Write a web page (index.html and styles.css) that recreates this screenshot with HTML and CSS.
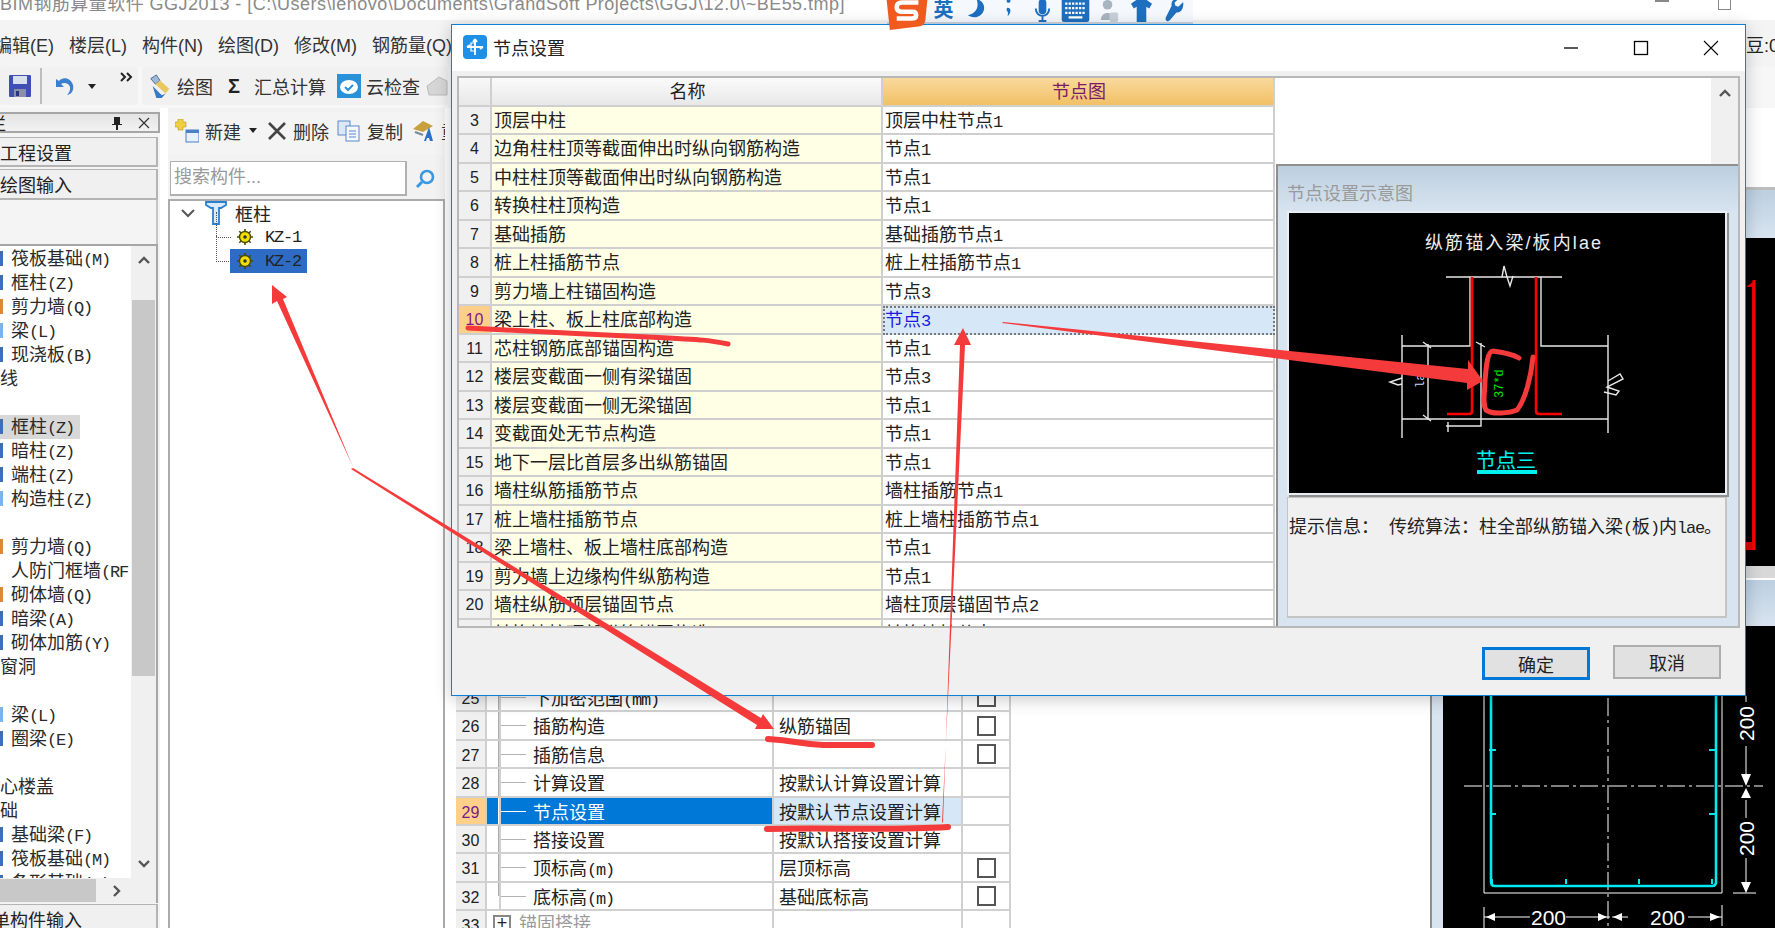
FILE: index.html
```html
<!DOCTYPE html>
<html lang="zh-CN">
<head>
<meta charset="utf-8">
<title>节点设置</title>
<link rel="stylesheet" href="styles.css">
</head>
<body>
<div class="app">
  <div class="titlebar"><span class="title-text">BIM钢筋算量软件 GGJ2013 - [C:\Users\lenovo\Documents\GrandSoft Projects\GGJ\12.0\~BE55.tmp]</span></div>
  <div class="menubar">
    <span class="menu first">编辑(E)</span><span class="menu">楼层(L)</span><span class="menu">构件(N)</span><span class="menu">绘图(D)</span><span class="menu">修改(M)</span><span class="menu">钢筋量(Q)</span>
    <span class="menu-right">豆:0</span>
  </div>
  <div class="toolbar">
    <div class="tool-seg seg-a">
      <svg class="ic24" viewBox="0 0 24 24"><rect x="1" y="1" width="22" height="22" rx="1" fill="#3f4fb5"/><rect x="5" y="2" width="14" height="8" fill="#d8e0ee"/><rect x="6" y="15" width="12" height="8" fill="#8a90a8"/><rect x="8" y="17" width="3" height="5" fill="#2c3480"/></svg>
      <i class="vsep"></i>
      <svg class="ic22" viewBox="0 0 22 24"><path d="M3 5v8h8L8 10c3-2 8-1 9 3 .6 3-1 6-3 8 5-1 7-5 6-10C18 4 10 2 6 7z" fill="#3a7fd0"/></svg>
      <i class="caret"></i>
      <svg class="ic-more" viewBox="0 0 14 12"><path d="M1 2l4 4-4 4M7 2l4 4-4 4" fill="none" stroke="#222" stroke-width="2"/></svg>
    </div>
    <div class="tool-seg seg-b">
      <svg class="ic24" viewBox="0 0 26 26"><path d="M3 5l6-4 4 6-5 4z" fill="#9db8d8" stroke="#4a6a90"/><path d="M8 11l5-4 10 9-4 5z" fill="#e8c860"/><path d="M5 13l10 10 4-2-4 5H9z" fill="#3a78c8"/></svg>
      <span class="tool-label">绘图</span>
      <span class="sigma">Σ</span>
      <span class="tool-label sum">汇总计算</span>
      <svg class="ic24" viewBox="0 0 24 24"><rect width="24" height="24" fill="#2a90d8"/><ellipse cx="12" cy="13" rx="9" ry="7" fill="#fff"/><path d="M8 13l3 3 5-5" fill="none" stroke="#2a90d8" stroke-width="2"/></svg>
      <span class="tool-label">云检查</span>
      <svg class="ic24" viewBox="0 0 24 24"><path d="M2 12L14 3l8 4v14H4z" fill="#d6d6d6" stroke="#bbb"/></svg>
    </div>
  </div>
  <div class="main">
    <aside class="left">
      <div class="panel-title"><span class="panel-cut">栏</span>
        <svg class="pin" viewBox="0 0 12 14"><path d="M3 1h6v7h2v1H7v5H5V9H1V8h2z" fill="#222"/></svg>
        <svg class="pin" viewBox="0 0 12 12"><path d="M1 1l10 10M11 1L1 11" stroke="#333" stroke-width="1.2"/></svg>
      </div>
      <div class="side-tab">工程设置</div>
      <div class="side-tab second"><span class="cut">绘图输入</span></div>
      <div class="side-gap"></div>
      <div class="list-frame">
        <div class="list-top">
          <ul class="list">
            <li class="li"><i class="chip blue"></i>筏板基础<span class="lat">(M)</span></li>
            <li class="li"><i class="chip blue"></i>框柱<span class="lat">(Z)</span></li>
            <li class="li"><i class="chip orange"></i>剪力墙<span class="lat">(Q)</span></li>
            <li class="li"><i class="chip sky"></i>梁<span class="lat">(L)</span></li>
            <li class="li"><i class="chip blue"></i>现浇板<span class="lat">(B)</span></li>
            <li class="li grp g1">轴线</li>
            <li class="li"></li>
            <li class="li sel"><i class="chip blue"></i>框柱<span class="lat">(Z)</span></li>
            <li class="li"><i class="chip blue"></i>暗柱<span class="lat">(Z)</span></li>
            <li class="li"><i class="chip blue"></i>端柱<span class="lat">(Z)</span></li>
            <li class="li"><i class="chip sky"></i>构造柱<span class="lat">(Z)</span></li>
            <li class="li"></li>
            <li class="li"><i class="chip orange"></i>剪力墙<span class="lat">(Q)</span></li>
            <li class="li deep">人防门框墙<span class="lat">(RF</span></li>
            <li class="li"><i class="chip orange"></i>砌体墙<span class="lat">(Q)</span></li>
            <li class="li"><i class="chip blue"></i>暗梁<span class="lat">(A)</span></li>
            <li class="li"><i class="chip blue"></i>砌体加筋<span class="lat">(Y)</span></li>
            <li class="li grp g1b">门窗洞</li>
            <li class="li"></li>
            <li class="li"><i class="chip sky"></i>梁<span class="lat">(L)</span></li>
            <li class="li"><i class="chip blue"></i>圈梁<span class="lat">(E)</span></li>
            <li class="li"></li>
            <li class="li grp g1">空心楼盖</li>
            <li class="li grp g1">基础</li>
            <li class="li"><i class="chip blue"></i>基础梁<span class="lat">(F)</span></li>
            <li class="li"><i class="chip blue"></i>筏板基础<span class="lat">(M)</span></li>
            <li class="li"><i class="chip blue"></i>条形基础<span class="lat">(T)</span></li>
          </ul>
          <div class="vscroll">
            <svg class="arr" viewBox="0 0 12 8"><path d="M1 7l5-5 5 5" fill="none" stroke="#555" stroke-width="2.4"/></svg>
            <div class="thumb"></div>
            <svg class="arr arr-down" viewBox="0 0 12 8"><path d="M1 1l5 5 5-5" fill="none" stroke="#555" stroke-width="2.4"/></svg>
          </div>
        </div>
        <div class="hscroll"><div class="hthumb"></div>
          <svg class="arr-r" viewBox="0 0 8 12"><path d="M1 1l5 5-5 5" fill="none" stroke="#555" stroke-width="2.4"/></svg>
        </div>
      </div>
      <div class="side-tab last"><span class="cut">单构件输入</span></div>
    </aside>

    <section class="tree-pane">
      <div class="pane-tools">
        <svg class="ic24" viewBox="0 0 24 24"><path d="M3 0h5v3h3v5H8v3H3V8H0V3h3z" fill="#f0d040" stroke="#b89820" stroke-width=".6"/><rect x="11" y="11" width="13" height="12" fill="#e8f0fa" stroke="#4a80c8"/><rect x="11" y="11" width="13" height="3" fill="#4a80c8"/></svg>
        <span class="tool-label narrow">新建</span><i class="caret small"></i>
        <svg class="ic20" viewBox="0 0 20 20"><path d="M2 2l16 16M18 2L2 18" stroke="#444" stroke-width="2.6"/></svg>
        <span class="tool-label narrow">删除</span>
        <svg class="ic24" viewBox="0 0 24 22"><rect x="1" y="1" width="12" height="14" fill="#dce8f8" stroke="#5a88c8"/><rect x="9" y="6" width="13" height="15" fill="#f4f8ff" stroke="#5a88c8"/><path d="M12 11h7M12 14h7M12 17h7" stroke="#5a88c8"/></svg>
        <span class="tool-label narrow">复制</span>
        <svg class="ic24" viewBox="0 0 24 24"><path d="M2 10l10-8 10 5-10 6z" fill="#c8a040"/><path d="M4 13l8 3" stroke="#789" stroke-width="2"/><path d="M13 22l5-14 4 14h-3l-1-3h-2l-1 3z" fill="#2a70c8"/></svg>
        <span class="tool-label narrow">重</span>
      </div>
      <div class="search-row">
        <div class="search">搜索构件...</div>
        <svg class="glass" viewBox="0 0 22 22"><circle cx="13" cy="9" r="6" fill="none" stroke="#3a98e0" stroke-width="2.6"/><path d="M8 14l-5 5" stroke="#3a98e0" stroke-width="3"/></svg>
      </div>
      <div class="tree">
        <div class="node root">
          <svg class="chev" viewBox="0 0 14 10"><path d="M1 2l6 6 6-6" fill="none" stroke="#555" stroke-width="2"/></svg>
          <svg class="column-ic" viewBox="0 0 22 24"><path d="M1 1h20v3l-5 3h-2v16H8V7H6L1 4z" fill="#dceaf8" stroke="#2a80d0" stroke-width="1.8"/></svg>
          <span>框柱</span>
        </div>
        <div class="node leaf"><svg class="gear" viewBox="0 0 16 16"><circle cx="8" cy="8" r="5.5" fill="#f4e000" stroke="#4a4a00" stroke-width="1.4"/><circle cx="8" cy="8" r="1.8" fill="#333"/><path d="M8 0v3M8 13v3M0 8h3M13 8h3M2.3 2.3l2 2M11.7 11.7l2 2M13.7 2.3l-2 2M4.3 11.7l-2 2" stroke="#4a4a00" stroke-width="1.6"/></svg><span class="kz">KZ-1</span></div>
        <div class="node leaf active"><span class="kz-wrap"><svg class="gear" viewBox="0 0 16 16"><circle cx="8" cy="8" r="5.5" fill="#f4e000" stroke="#4a4a00" stroke-width="1.4"/><circle cx="8" cy="8" r="1.8" fill="#333"/><path d="M8 0v3M8 13v3M0 8h3M13 8h3M2.3 2.3l2 2M11.7 11.7l2 2M13.7 2.3l-2 2M4.3 11.7l-2 2" stroke="#4a4a00" stroke-width="1.6"/></svg><span class="kz">KZ-2</span></span></div>
      </div>
    </section>

    <section class="prop-pane">
      <div class="prop-row"><span class="p-num">25</span><span class="p-tree"></span><span class="p-name">下加密范围<span class="lat">(mm)</span></span><span class="p-val"></span><span class="p-chk"><i class="box"></i></span></div>
      <div class="prop-row"><span class="p-num">26</span><span class="p-tree"></span><span class="p-name">插筋构造</span><span class="p-val">纵筋锚固</span><span class="p-chk"><i class="box"></i></span></div>
      <div class="prop-row"><span class="p-num">27</span><span class="p-tree"></span><span class="p-name">插筋信息</span><span class="p-val"></span><span class="p-chk"><i class="box"></i></span></div>
      <div class="prop-row"><span class="p-num">28</span><span class="p-tree"></span><span class="p-name">计算设置</span><span class="p-val">按默认计算设置计算</span><span class="p-chk"></span></div>
      <div class="prop-row picked"><span class="p-num">29</span><span class="p-tree"></span><span class="p-name">节点设置</span><span class="p-val">按默认节点设置计算</span><span class="p-chk"></span></div>
      <div class="prop-row"><span class="p-num">30</span><span class="p-tree"></span><span class="p-name">搭接设置</span><span class="p-val">按默认搭接设置计算</span><span class="p-chk"></span></div>
      <div class="prop-row"><span class="p-num">31</span><span class="p-tree"></span><span class="p-name">顶标高<span class="lat">(m)</span></span><span class="p-val">层顶标高</span><span class="p-chk"><i class="box"></i></span></div>
      <div class="prop-row end"><span class="p-num">32</span><span class="p-tree"></span><span class="p-name">底标高<span class="lat">(m)</span></span><span class="p-val">基础底标高</span><span class="p-chk"><i class="box"></i></span></div>
      <div class="prop-row group"><span class="p-num">33</span><span class="p-group"><i class="plus">+</i>锚固搭接</span><span class="p-val"></span><span class="p-chk"></span></div>
    </section>

    <section class="draw-pane">
      <div class="rail"></div>
      <div class="views">
        <div class="v-top"></div>
        <div class="v-band"></div>
        <div class="v-black upper">
          <svg class="fill-svg" viewBox="1443 238 332 328"><path d="M1746 287l9-7v270h-9v-8h6V287z" fill="#e00000"/><path d="M1754 280v270" stroke="#f00" stroke-width="3"/></svg>
        </div>
        <div class="v-gray"></div>
        <div class="v-band low"></div>
        <div class="v-black lower">
          <svg class="fill-svg" viewBox="1443 626 332 302">
            <g fill="none" stroke="#fff">
              <path d="M1484 650v243h238V650"/>
              <path d="M1464 786h299" stroke-dasharray="18 4 3 4"/>
              <path d="M1608 640v288" stroke-dasharray="18 4 3 4"/>
              <path d="M1746 696v6M1746 746v28M1746 800v18M1746 858v26M1733 893h23M1484 907v21M1722 905v21"/>
              <path d="M1484 917h46M1566 917h44M1612 917h16M1688 917h34"/>
            </g>
            <g fill="#fff">
              <path d="M1741 774h10l-5 12zM1741 798h10l-5-10zM1741 882h10l-5 11zM1486 917l9-4v8zM1598 913l9 4-9 4zM1622 913l-9 4 9 4zM1710 913l10 4-10 4z"/>
              <text class="dim" transform="translate(1754 741) rotate(-90)">200</text>
              <text class="dim" transform="translate(1754 856) rotate(-90)">200</text>
              <text class="dim" x="1531" y="925">200</text>
              <text class="dim" x="1650" y="925">200</text>
            </g>
            <path d="M1491 640v242q0 4 4 4h217q4 0 4-4V640" fill="none" stroke="#00e8f0" stroke-width="2.6"/>
            <g stroke="#00e8f0" stroke-width="2" fill="none">
              <path d="M1490 750h6M1490 814h6M1709 750h6M1709 814h6M1492 879v5M1566 879v5M1639 879v5M1712 879v5M1489 750h2"/>
            </g>
          </svg>
        </div>
      </div>
    </section>
  </div>
</div>

<div class="ime">
  <svg class="ime-logo" viewBox="0 0 40 28"><path d="M2 0h36l-2 20q-1 5-6 5L5 28z" fill="#f05a1e"/><path d="M30 4H16q-5 0-5 4t5 4h9q3 0 3 3t-4 3H11" fill="none" stroke="#fff" stroke-width="4"/></svg>
  <span class="ime-en">英</span>
  <svg class="ime-ic" viewBox="0 0 20 24"><path d="M10 0c3 8 0 15-9 17 8 5 17 0 17-8 0-4-3-8-8-9z" fill="#1f6fc0"/></svg>
  <svg class="ime-ic" viewBox="0 0 10 24"><circle cx="4" cy="2" r="2" fill="#1f6fc0"/><path d="M3 9c4 0 4 5 0 9 1-4 0-5-1-6 0-2 0-3 1-3z" fill="#1f6fc0"/></svg>
  <svg class="ime-ic" viewBox="0 0 20 24"><rect x="6" width="8" height="16" rx="4" fill="#1f6fc0"/><path d="M3 10c0 10 14 10 14 0M10 18v5M6 23h8" fill="none" stroke="#1f6fc0" stroke-width="2"/></svg>
  <svg class="ime-ic" viewBox="0 0 24 20"><rect width="24" height="20" rx="2" fill="#1f6fc0"/><path d="M3 4h18M3 8h18M3 12h18" stroke="#fff" stroke-width="2" stroke-dasharray="2 1"/><path d="M6 16h12" stroke="#fff" stroke-width="2"/></svg>
  <svg class="ime-ic" viewBox="0 0 20 24"><circle cx="9" cy="6" r="5" fill="#a8b4c0"/><path d="M2 22c0-10 14-10 14 0z" fill="#a8b4c0"/><rect x="11" y="14" width="9" height="10" rx="2" fill="#c8d0d8"/></svg>
  <svg class="ime-ic" viewBox="0 0 22 24"><path d="M7 0h8l7 5-3 5-3-2v16H6V8l-3 2-3-5z" fill="#1f6fc0"/></svg>
  <svg class="ime-ic" viewBox="0 0 20 24"><path d="M19 3l-5 5-3-1-1-3 4-4c-4-1-8 2-7 7L1 19q-1 3 1 4t4-2l6-7c5 1 8-5 7-11z" fill="#1f6fc0"/></svg>
</div>
<div class="winctl top-min"></div>
<div class="winctl top-res"></div>

<div class="dialog">
  <header class="dlg-head">
    <svg class="dlg-icon" viewBox="0 0 24 24"><rect width="24" height="24" rx="4" fill="#1e90e8"/><path d="M12 4v16M4 12h16M12 4l-2 3M12 4l2 3M4 12l3-2M20 12l-3 2" fill="none" stroke="#fff" stroke-width="1.8"/><path d="M8 8h4v8H8z" fill="none" stroke="#fff" stroke-width="1.2"/></svg>
    <span class="dlg-title">节点设置</span>
    <span class="dlg-ctrls">
      <svg class="ctl" viewBox="0 0 16 16"><path d="M1 8h14" stroke="#000" stroke-width="1.3"/></svg>
      <svg class="ctl" viewBox="0 0 16 16"><rect x="1.5" y="1.5" width="13" height="13" fill="none" stroke="#000" stroke-width="1.3"/></svg>
      <svg class="ctl" viewBox="0 0 16 16"><path d="M1 1l14 14M15 1L1 15" stroke="#000" stroke-width="1.1"/></svg>
    </span>
  </header>
  <div class="dlg-body">
    <div class="grid-box">
      <div class="grid">
        <div class="g-row head"><span class="c-num"></span><span class="c-name">名称</span><span class="c-val">节点图</span></div>
        <div class="g-row"><span class="c-num">3</span><span class="c-name">顶层中柱</span><span class="c-val">顶层中柱节点<span class="lat">1</span></span></div>
        <div class="g-row"><span class="c-num">4</span><span class="c-name">边角柱柱顶等截面伸出时纵向钢筋构造</span><span class="c-val">节点<span class="lat">1</span></span></div>
        <div class="g-row"><span class="c-num">5</span><span class="c-name">中柱柱顶等截面伸出时纵向钢筋构造</span><span class="c-val">节点<span class="lat">1</span></span></div>
        <div class="g-row"><span class="c-num">6</span><span class="c-name">转换柱柱顶构造</span><span class="c-val">节点<span class="lat">1</span></span></div>
        <div class="g-row"><span class="c-num">7</span><span class="c-name">基础插筋</span><span class="c-val">基础插筋节点<span class="lat">1</span></span></div>
        <div class="g-row"><span class="c-num">8</span><span class="c-name">桩上柱插筋节点</span><span class="c-val">桩上柱插筋节点<span class="lat">1</span></span></div>
        <div class="g-row"><span class="c-num">9</span><span class="c-name">剪力墙上柱锚固构造</span><span class="c-val">节点<span class="lat">3</span></span></div>
        <div class="g-row now"><span class="c-num">10</span><span class="c-name">梁上柱、板上柱底部构造</span><span class="c-val">节点<span class="lat">3</span></span></div>
        <div class="g-row"><span class="c-num">11</span><span class="c-name">芯柱钢筋底部锚固构造</span><span class="c-val">节点<span class="lat">1</span></span></div>
        <div class="g-row"><span class="c-num">12</span><span class="c-name">楼层变截面一侧有梁锚固</span><span class="c-val">节点<span class="lat">3</span></span></div>
        <div class="g-row"><span class="c-num">13</span><span class="c-name">楼层变截面一侧无梁锚固</span><span class="c-val">节点<span class="lat">1</span></span></div>
        <div class="g-row"><span class="c-num">14</span><span class="c-name">变截面处无节点构造</span><span class="c-val">节点<span class="lat">1</span></span></div>
        <div class="g-row"><span class="c-num">15</span><span class="c-name">地下一层比首层多出纵筋锚固</span><span class="c-val">节点<span class="lat">1</span></span></div>
        <div class="g-row"><span class="c-num">16</span><span class="c-name">墙柱纵筋插筋节点</span><span class="c-val">墙柱插筋节点<span class="lat">1</span></span></div>
        <div class="g-row"><span class="c-num">17</span><span class="c-name">桩上墙柱插筋节点</span><span class="c-val">桩上墙柱插筋节点<span class="lat">1</span></span></div>
        <div class="g-row"><span class="c-num">18</span><span class="c-name">梁上墙柱、板上墙柱底部构造</span><span class="c-val">节点<span class="lat">1</span></span></div>
        <div class="g-row"><span class="c-num">19</span><span class="c-name">剪力墙上边缘构件纵筋构造</span><span class="c-val">节点<span class="lat">1</span></span></div>
        <div class="g-row"><span class="c-num">20</span><span class="c-name">墙柱纵筋顶层锚固节点</span><span class="c-val">墙柱顶层锚固节点<span class="lat">2</span></span></div>
        <div class="g-row"><span class="c-num">21</span><span class="c-name">转换墙柱顶部纵筋锚固构造</span><span class="c-val">转换墙柱节点<span class="lat">1</span></span></div>
      </div>
      <div class="grid-scroll"><svg class="arr" viewBox="0 0 12 8"><path d="M1 7l5-5 5 5" fill="none" stroke="#555" stroke-width="2.4"/></svg></div>
      <div class="hint">
        <div class="hint-title">节点设置示意图</div>
        <div class="diagram">
          <svg class="fill-svg" viewBox="1290 213 436 280">
            <text class="d-title" x="1426" y="249">纵筋锚入梁/板内lae</text>
            <g fill="none" stroke="#e8e8e8" stroke-width="1.4">
              <path d="M1447 277h116"/>
              <path d="M1471 277v69h-68M1542 277v69h67"/>
              <path d="M1403 335v103M1609 335v98M1403 419h206"/>
              <path d="M1429 344v75M1424 342l8 6M1424 415l8 6"/>
              <path d="M1482 343v83h-35M1477 342l9 5M1449 422v10"/>
              <path d="M1505 266l3 11 3 9 3-10M1503 277l2-11"/>
              <path d="M1609 381l12-7 3 5-16 8 12 4-3 4-12-3M1403 378l-12 4 8 3 4-1"/>
            </g>
            <g fill="none" stroke="#f00" stroke-width="2.6">
              <path d="M1473 277v134q0 3-3 3h-22"/>
              <path d="M1537 277v134q0 3 3 3h23"/>
            </g>
            <text class="d-green" transform="translate(1504 398) rotate(-90)">37*d</text>
            <text class="d-la" transform="translate(1425 388) rotate(-90)">la</text>
            <text class="d-cyan" x="1507" y="468">节点三</text>
            <rect x="1478" y="470" width="60" height="4" fill="#00f0f0"/>
          </svg>
        </div>
        <div class="hint-info">提示信息：  传统算法：柱全部纵筋锚入梁<span class="lat">(</span>板<span class="lat">)</span>内<span class="lat">lae</span>。</div>
      </div>
    </div>
    <div class="dlg-foot">
      <button class="btn primary">确定</button>
      <button class="btn">取消</button>
    </div>
  </div>
</div>

<svg class="marks" viewBox="0 0 1775 928">
  <g fill="#f43a3a">
    <path d="M353 467L277 301l-5 3v-19l15 12-4 2z"/>
    <path d="M351 469l2-1 408 250 2-4 11 15h-19l2-4z"/>
    <path d="M942 823l1-1 17-477h-6l9-17 8 17h-6z"/>
    <path d="M1002 323l1-1 465 47v-9l15 21-16 9 0-7z"/>
  </g>
  <g fill="none" stroke="#f43a3a" stroke-linecap="round">
    <path d="M468 328c50 3 120 6 180 9s60 3 80 7" stroke-width="5"/>
    <path d="M768 739c30 2 30 5 55 6h49" stroke-width="6"/>
    <path d="M767 829c60-2 120 2 181-2" stroke-width="6"/>
    <path d="M1519 358c-8-5-18-6-26-7-6 0-7 18-8 30 0 12-3 22 1 29 6 5 24 3 31 0 8-10 14-32 16-53" stroke-width="5"/>
  </g>
</svg>
</body>
</html>
```
FILE: styles.css
```css
* { box-sizing: border-box; }
html, body { margin: 0; padding: 0; width: 1775px; height: 928px; overflow: hidden; background: #fff; }
body { position: relative; font-family: "Liberation Sans", "Noto Sans CJK SC", sans-serif; font-size: 18px; color: #222; }
ul { list-style: none; margin: 0; padding: 0; }
.lat { font-family: "Liberation Mono", "Noto Sans CJK SC", monospace; font-size: 17px; letter-spacing: -1.2px; }

.app { width: 1775px; height: 928px; display: flex; flex-direction: column; overflow: hidden; }
.titlebar { height: 20px; background: #fff; overflow: hidden; flex: none; }
.title-text { display: block; margin-top: -8px; line-height: 24px; color: #8a8a8a; font-size: 18px; white-space: nowrap; letter-spacing: .46px; }

.menubar { height: 47px; flex: none; background: #f4f4f4; display: flex; align-items: center; gap: 15px; white-space: nowrap; position: relative; }
.menu { color: #333; }
.menu.first { margin-left: -6px; }
.menu-right { margin-left: auto; margin-right: -4px; }

.toolbar { height: 41px; flex: none; background: #f7f7f7; display: flex; align-items: center; gap: 4px; padding-bottom: 3px; }
.tool-seg { height: 38px; flex: none; display: flex; align-items: center; background: #f1f1f1; border-radius: 3px; }
.seg-a { width: 138px; padding-left: 8px; position: relative; }
.seg-b { width: 306px; padding-left: 6px; gap: 5px; }
.ic24 { width: 24px; height: 24px; flex: none; }
.ic22 { width: 22px; height: 24px; flex: none; }
.ic20 { width: 20px; height: 20px; flex: none; }
.vsep { width: 2px; height: 36px; background: #bdbdbd; margin: 0 11px 0 8px; }
.caret { width: 0; height: 0; border: 4px solid transparent; border-top: 5px solid #222; border-bottom: 0; margin-left: 13px; }
.caret.small { margin: 0 10px 0 0; }
.ic-more { position: absolute; left: 120px; top: 4px; width: 14px; height: 12px; }
.tool-label { white-space: nowrap; color: #333; }
.tool-label.sum { margin-right: 6px; }
.tool-label.narrow { margin: 0 8px 0 2px; }
.sigma { font-weight: bold; font-size: 20px; margin: 0 9px 0 10px; color: #222; }

.main { flex: 1; min-height: 0; display: flex; overflow: hidden; }

.left { width: 160px; flex: none; padding-top: 4px; display: flex; flex-direction: column; background: #f4f4f4; overflow: hidden; }
.panel-title { height: 21px; flex: none; display: flex; align-items: center; justify-content: flex-end; gap: 15px; padding-right: 8px; background: linear-gradient(#e4e4e4, #f2f2f2); border: 2px solid #a6a6a6; border-left: 0; position: relative; overflow: hidden; }
.panel-cut { margin-right: auto; margin-left: -11px; font-size: 17px; }
.pin { width: 12px; height: 14px; }
.side-tab { height: 30px; flex: none; margin-top: 4px; width: 158px; line-height: 32px; background: #f0f0f0; border: 1px solid #b4b4b4; border-width: 1px 2px 2px 0; overflow: hidden; white-space: nowrap; }
.side-tab.second { margin-top: 2px; height: 31px; }
.cut { display: block; margin-left: 0; }
.side-gap { height: 44px; flex: none; width: 158px; border-right: 2px solid #c4c4c4; }
.list-frame { height: 659px; flex: none; width: 158px; border: 2px solid #a6a6a6; border-width: 2px 2px 2px 0; display: flex; flex-direction: column; }
.list-top { height: 632px; flex: none; display: flex; }
.list { width: 131px; flex: none; background: #fff; overflow: hidden; padding-top: 1px; }
.li { height: 24px; line-height: 24px; padding-left: 11px; position: relative; white-space: nowrap; color: #2a2a2a; }
.li.sel { background: #d8d8d8; width: 80px; }
.li.grp { padding-left: 0; }
.li.g1, .li.g1b { margin-left: -18px; }
.chip { position: absolute; left: 0; top: 4px; width: 3px; height: 15px; }
.chip.blue { background: #3d6fb8; }
.chip.orange { background: #d88a3a; }
.chip.sky { background: #7ab4ec; }
.vscroll { width: 25px; flex: none; background: #f0f0f0; display: flex; flex-direction: column; align-items: center; padding-top: 10px; }
.arr { width: 12px; height: 8px; flex: none; }
.thumb { width: 23px; height: 376px; background: #c8c8c8; margin-top: 36px; flex: none; }
.arr-down { margin-top: 184px; }
.hscroll { height: 25px; flex: none; background: #f0f0f0; display: flex; align-items: center; position: relative; }
.hthumb { width: 96px; height: 23px; background: #c8c8c8; }
.arr-r { width: 8px; height: 12px; margin-left: 17px; }
.side-tab.last { margin-top: 1px; height: 40px; border-bottom: 0; }
.side-tab.last .cut { margin-left: -8px; }

.tree-pane { width: 277px; flex: none; margin-left: 8px; padding-top: 4px; display: flex; flex-direction: column; background: #f2f2f2; }
.pane-tools { height: 43px; flex: none; padding: 0 0 6px 7px; display: flex; align-items: center; overflow: hidden; background: #f4f4f4; white-space: nowrap; }
.pane-tools .ic24 { margin-right: 4px; }
.pane-tools .ic20 { margin-right: 4px; }
.search-row { height: 35px; margin-top: 6px; flex: none; display: flex; align-items: center; }
.search { width: 237px; height: 35px; margin-left: 2px; padding-left: 3px; line-height: 30px; border: 2px solid #b0b0b0; border-width: 1px 2px 2px 1px; background: #fff; color: #9a9a9a; }
.glass { width: 22px; height: 22px; margin-left: 7px; }
.tree { flex: 1; margin-top: 3px; width: 277px; background: #fff; border: 2px solid #ababab; border-bottom: 0; }
.node { height: 24px; display: flex; align-items: center; position: relative; white-space: nowrap; }
.node.root { padding-left: 11px; }
.chev { width: 14px; height: 10px; }
.column-ic { width: 22px; height: 24px; margin-left: 10px; }
.node.root span { margin-left: 8px; }
.node.leaf { padding-left: 60px; }
.node.leaf::before { content: ""; position: absolute; left: 46px; top: -13px; width: 14px; height: 25px; border-left: 1px dotted #555; border-bottom: 1px dotted #555; }
.gear { width: 16px; height: 16px; flex: none; margin-left: 7px; }
.kz { font-family: "Liberation Mono", monospace; font-size: 17px; letter-spacing: -1.2px; margin-left: 12px; color: #222; }
.kz-wrap { display: flex; align-items: center; width: 77px; height: 24px; background: #2e6bc4; }

.prop-pane { width: 985px; flex: none; padding: 576px 0 0 11px; background: #fff; overflow: hidden; }
.prop-row { height: 28.4px; display: flex; width: 555px; border-bottom: 2px solid #d0d0d0; line-height: 30px; }
.prop-row > span { display: block; height: 100%; border-right: 2px solid #d0d0d0; white-space: nowrap; overflow: hidden; }
.p-num { width: 31px; flex: none; background: #f0f0f0; text-align: center; font-size: 16px; }
.p-tree { width: 14px; flex: none; position: relative; }
.p-name { width: 273px; flex: none; padding-left: 32px; position: relative; }
.p-tree::after { content: ""; position: absolute; right: 0; top: -2px; bottom: -2px; width: 1px; background: #ababab; }
.p-name::before { content: ""; position: absolute; left: 0; top: 13px; width: 25px; height: 1px; background: #b4b4b4; }
.prop-row.end .p-tree::after { bottom: 13px; }
.p-val { width: 189px; flex: none; padding-left: 5px; }
.p-chk { width: 48px; flex: none; display: flex !important; align-items: center; justify-content: center; }
.box { width: 19px; height: 20px; border: 2px solid #555; background: #fff; }
.prop-row.picked .p-num { background: #fdd08a; color: #7a1a8a; }
.prop-row.picked .p-tree, .prop-row.picked .p-name { background: #0078d7; color: #fff; }
.prop-row.picked .p-name::before, .prop-row.picked .p-tree::after { background: #fff; }
.prop-row.picked .p-val { background: #d6e8f8; }
.p-group { width: 287px; flex: none; display: flex !important; align-items: center; color: #9a9a9a; padding-left: 6px; }
.plus { width: 18px; height: 18px; border: 2px solid #888; font-style: normal; color: #222; line-height: 13px; text-align: center; margin-right: 8px; font-size: 18px; }

.draw-pane { width: 345px; flex: none; border-left: 2px solid #8e8e8e; display: flex; }
.rail { width: 11px; flex: none; background: #d8e4f0; }
.views { flex: 1; min-width: 0; display: flex; flex-direction: column; }
.v-top { height: 82px; flex: none; background: #fff; border-bottom: 3px solid #bdbdbd; }
.v-band { height: 48px; flex: none; background: linear-gradient(#bccfe0, #d8e4f0); }
.v-band.low { height: 46px; }
.v-black { background: #000; overflow: hidden; }
.upper { height: 328px; flex: none; }
.lower { flex: 1; min-height: 0; }
.v-gray { height: 14px; flex: none; background: #d8d8d8; border-bottom: 2px solid #fff; }
.fill-svg { display: block; width: 100%; height: 100%; }
.dim { font-family: "Liberation Sans", sans-serif; font-size: 21px; }

.ime { position: absolute; left: 887px; top: -2px; width: 306px; height: 26px; display: flex; align-items: center; padding-left: 40px; background: #f5f9fd; border-bottom: 2px solid #c8d4e0; }
.ime-logo { position: absolute; left: -3px; top: 0; width: 46px; height: 32px; z-index: 1; }
.ime-en { color: #1f6fc0; font-weight: bold; font-size: 20px; line-height: 24px; width: 33px; text-align: center; flex: none; }
.ime-ic { width: 33px; height: 23px; flex: none; }

.winctl { position: absolute; top: 0; }
.top-min { left: 1655px; width: 14px; height: 2px; background: #888; }
.top-res { left: 1718px; width: 13px; height: 10px; border: 1px solid #888; border-top: 0; }

.dialog { position: absolute; left: 451px; top: 24px; width: 1295px; height: 672px; background: #f0f0f0; border: 1px solid #0f80d8; display: flex; flex-direction: column; box-shadow: 0 3px 16px rgba(0, 0, 0, .22); }
.dlg-head { height: 46px; flex: none; background: #fff; display: flex; align-items: center; padding-left: 11px; }
.dlg-icon { width: 24px; height: 24px; margin-top: -2px; }
.dlg-title { margin: -2px 0 0 6px; }
.dlg-ctrls { margin-left: auto; display: flex; gap: 54px; margin-right: 26px; }
.ctl { width: 16px; height: 16px; }
.dlg-body { flex: 1; min-height: 0; padding: 5px 5px 0 5px; display: flex; flex-direction: column; }
.grid-box { height: 552px; flex: none; background: #fff; border: 2px solid #b8b8b8; position: relative; overflow: hidden; display: flex; }
.grid { width: 816px; flex: none; overflow: hidden; }
.g-row { height: 28.5px; display: flex; line-height: 28px; white-space: nowrap; }
.g-row > span { display: block; height: 100%; overflow: hidden; border-bottom: 2px solid #cfcfcf; border-right: 2px solid #cfcfcf; }
.c-num { width: 33px; flex: none; background: #f0f0f0; text-align: center; font-size: 16px; }
.c-name { width: 391px; flex: none; background: #ffffe6; padding-left: 2px; }
.c-val { width: 392px; flex: none; background: #fff; padding-left: 2px; }
.g-row.head > span { text-align: center; }
.g-row.head .c-num { background: linear-gradient(#f8f8f8, #e8e8e8); }
.g-row.head .c-name { background: linear-gradient(#fbfbfb, #e8e8e8); }
.g-row.head .c-val { background: linear-gradient(#f9d99c, #f2c066); color: #7a1a6a; }
.g-row.now .c-num { background: #fdd08a; color: #7a1a8a; }
.g-row.now .c-val { background: #d6e8f8; color: #1a1ae0; border: 2px dotted #777; padding-left: 0; line-height: 24px; }
.grid-scroll { position: absolute; right: 0; top: 0; width: 27px; height: 86px; background: #f0f0f0; display: flex; justify-content: center; padding-top: 11px; }

.hint { position: absolute; left: 817px; top: 86px; width: 466px; height: 464px; border: 2px solid #8f8f8f; background: linear-gradient(#bccfe0 0, #d8e4f0 46px); display: flex; flex-direction: column; padding: 0 15px 0 11px; }
.hint-title { height: 47px; flex: none; line-height: 56px; color: #9a9a9a; margin-left: -2px; }
.diagram { height: 280px; flex: none; background: #000; box-shadow: 0 0 0 2px #e8eef5, 2px 2px 0 2px #909090; }
.hint-info { height: 121px; flex: none; margin: 4px -2px 0; padding: 13px 0 0 1px; background: #f0f0f0; border: 1px solid #c4c4c4; border-width: 1px 2px 2px 1px; white-space: pre; line-height: 32px; }
.d-title { font-family: "Liberation Sans", "Noto Sans CJK SC", sans-serif; font-size: 18px; fill: #eee; letter-spacing: 2.1px; }
.d-green { font-family: "Liberation Mono", monospace; font-size: 12px; fill: #00e800; }
.d-la { font-family: "Liberation Mono", monospace; font-size: 12px; fill: #c8d8ff; }
.d-cyan { font-family: "Noto Sans CJK SC", sans-serif; font-size: 20px; fill: #00f0f0; text-anchor: middle; }

.dlg-foot { flex: 1; display: flex; justify-content: flex-end; align-items: flex-start; gap: 23px; padding: 17px 19px 0 0; }
.btn { width: 108px; height: 34px; font: inherit; color: #222; background: #e1e1e1; border: 2px solid #adadad; padding: 0; }
.btn.primary { height: 33px; margin-top: 2px; border: 3px solid #0078d7; }

.marks { position: absolute; left: 0; top: 0; width: 1775px; height: 928px; pointer-events: none; }
```
